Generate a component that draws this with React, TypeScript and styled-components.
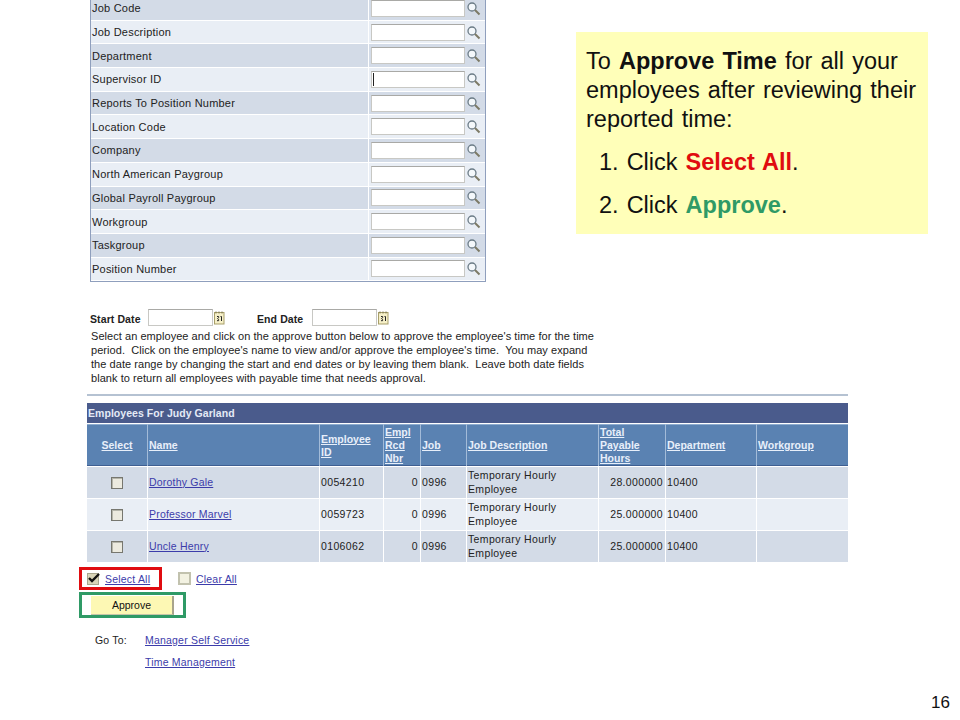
import React from "react";
import styled, { createGlobalStyle } from "styled-components";

const searchFields = [
  "Job Code",
  "Job Description",
  "Department",
  "Supervisor ID",
  "Reports To Position Number",
  "Location Code",
  "Company",
  "North American Paygroup",
  "Global Payroll Paygroup",
  "Workgroup",
  "Taskgroup",
  "Position Number",
];

const employees = [
  { name: "Dorothy Gale", id: "0054210", hours: "28.000000" },
  { name: "Professor Marvel", id: "0059723", hours: "25.000000" },
  { name: "Uncle Henry", id: "0106062", hours: "25.000000" },
];

const GlobalStyle = createGlobalStyle`
  html, body {
    margin: 0;
    padding: 0;
    background: #fff;
  }
  body {
    font-family: "Liberation Sans", Arial, sans-serif;
    color: #222;
  }
`;

const Page = styled.div`
  width: 960px;
  height: 720px;
  overflow: hidden;
  display: flex;
  flex-direction: column;
`;

const TopSection = styled.div`
  display: flex;
  align-items: flex-start;
  margin-top: -3px;
  padding-left: 90px;
`;

const SearchPanel = styled.div`
  width: 396px;
  box-sizing: border-box;
  border: 1px solid #8f9fbd;
  border-top: none;
  height: 285px;
  background: #fff;
`;

const SearchRow = styled.div<{ $shaded: boolean }>`
  display: grid;
  grid-template-columns: 277px 1fr;
  height: 23.7px;
  background: ${(p) => (p.$shaded ? "#d3dbe7" : "#e9eef5")};
  border-bottom: 1px solid #fff;
  box-sizing: border-box;
`;

const SearchLabel = styled.div`
  display: flex;
  align-items: center;
  padding-left: 1px;
  font-size: 11px;
  letter-spacing: 0.22px;
`;

const SearchCell = styled.div`
  display: flex;
  align-items: center;
  gap: 1px;
  padding-left: 2px;
  border-left: 1px solid #fff;
`;

const TextBox = styled.div<{ $width: number }>`
  width: ${(p) => p.$width}px;
  height: 17px;
  box-sizing: border-box;
  background: #fff;
  border: 1px solid #c8c8c4;
  border-top-color: #a9a9a6;
  display: flex;
  align-items: center;
  padding-left: 1px;
`;

const Caret = styled.span`
  width: 1px;
  height: 13px;
  background: #222;
`;

const Callout = styled.div`
  margin: 35px 0 0 90px;
  width: 352px;
  height: 202px;
  box-sizing: border-box;
  background: #ffffb9;
  padding: 15px 0 0 10px;
  font-size: 23.5px;
  line-height: 29px;
  color: #111;
`;

const CalloutText = styled.p`
  margin: 0 0 14px;
  word-spacing: 1.6px;
`;

const CalloutStep = styled.p`
  margin: 0 0 14px 13px;
  word-spacing: 1.5px;
`;

const Accent = styled.b<{ $color: string }>`
  color: ${(p) => p.$color};
`;

const DateRow = styled.div`
  display: flex;
  align-items: center;
  height: 17px;
  margin: 27px 0 0 90px;
`;

const DateLabel = styled.b<{ $width: number }>`
  width: ${(p) => p.$width}px;
  font-size: 10.5px;
  letter-spacing: 0.1px;
  padding-top: 3px;
`;

const CalendarSlot = styled.div<{ $width: number }>`
  width: ${(p) => p.$width}px;
  padding-left: 1px;
  display: flex;
`;

const Instructions = styled.p`
  margin: 3px 0 0 91px;
  width: 520px;
  font-size: 11px;
  letter-spacing: 0.05px;
  line-height: 14px;
  white-space: pre-wrap;
`;

const Rule = styled.div`
  margin: 9px 0 0 87px;
  width: 761px;
  height: 2px;
  background: #b5c2d2;
`;

const EmployeeGrid = styled.div`
  margin: 7px 0 0 87px;
  width: 761px;
`;

const GridTitle = styled.div`
  height: 20px;
  background: #4a5b8c;
  color: #e4eaf6;
  font-size: 10.5px;
  letter-spacing: 0.05px;
  font-weight: bold;
  display: flex;
  align-items: center;
  padding-left: 1px;
`;

const Row = styled.div`
  display: grid;
  grid-template-columns: 60px 171px 63px 36px 45px 131px 66px 90px 1fr;
  column-gap: 1px;
  margin-top: 1px;
`;

const HeadRow = styled(Row)`
  background: #a3bbd8;
`;

const HeadCell = styled.a<{ $center?: boolean }>`
  height: 42px;
  box-sizing: border-box;
  background: #5a82b2;
  border-top: 1px solid #8eaccf;
  border-bottom: 1px solid #3f5f92;
  color: #e8effa;
  font-size: 10.5px;
  font-weight: bold;
  line-height: 13px;
  text-decoration: underline;
  padding: 1px 0 0 ${(p) => (p.$center ? 0 : 1)}px;
  display: flex;
  align-items: center;
  justify-content: ${(p) => (p.$center ? "center" : "flex-start")};
  white-space: pre-line;
`;

const DataRow = styled(Row)`
  height: 31px;
`;

const DataCell = styled.div<{ $shaded: boolean; $align?: string }>`
  background: ${(p) => (p.$shaded ? "#d3dbe7" : "#e9eef5")};
  font-size: 10.5px;
  line-height: 13.5px;
  letter-spacing: 0.35px;
  padding: 0 2px 0 1px;
  display: flex;
  align-items: center;
  justify-content: ${(p) => p.$align ?? "flex-start"};
`;

const PeopleLink = styled.a`
  color: #3c3caa;
  text-decoration: underline;
  font-size: 10.5px;
  letter-spacing: 0.2px;
`;

const CheckBox = styled.span<{ $size?: number }>`
  position: relative;
  display: inline-block;
  width: ${(p) => p.$size ?? 12}px;
  height: ${(p) => p.$size ?? 12}px;
  box-sizing: border-box;
  background: #eceadf;
  border: 1px solid #77776f;
  box-shadow: inset 1px 1px 0 #b5b5aa;
`;

const TickedBox = styled(CheckBox)`
  background: #d8d4b8;
  border-color: #a8a68e;
  box-shadow: none;
`;

const ClearBox = styled(CheckBox)`
  background: #f3f2e2;
  border: 2px solid #c2c2ae;
  box-shadow: none;
`;

const ActionRow = styled.div`
  display: flex;
  align-items: center;
  margin: 5px 0 0 79px;
`;

const RedFrame = styled.div`
  width: 83px;
  height: 23px;
  box-sizing: border-box;
  border: 3px solid #e00c10;
  display: flex;
  align-items: center;
  gap: 6px;
  padding-left: 5px;
`;

const ClearGroup = styled.div`
  display: flex;
  align-items: center;
  gap: 5px;
  margin-left: 16px;
`;

const GreenFrame = styled.div`
  margin: 2px 0 0 79px;
  width: 107px;
  height: 26px;
  box-sizing: border-box;
  border: 3px solid #2f9a66;
  display: flex;
  align-items: center;
  padding-left: 9px;
`;

const ApproveButton = styled.div`
  width: 81px;
  height: 18px;
  background: #fdf8b4;
  border-right: 2px solid #a8a48c;
  border-bottom: 1px solid #c8c4a8;
  font-size: 10.5px;
  color: #111;
  display: flex;
  align-items: center;
  justify-content: center;
`;

const GoTo = styled.div`
  display: grid;
  grid-template-columns: 50px auto;
  justify-content: start;
  margin: 15px 0 0 95px;
  font-size: 10.5px;
  letter-spacing: 0.2px;
  line-height: 14px;
`;

const GoToLinks = styled.div`
  display: flex;
  flex-direction: column;
  row-gap: 8px;
`;

const PageNumber = styled.div`
  align-self: flex-end;
  margin: 24px 10px 0 0;
  font-size: 17px;
  line-height: 20px;
  color: #111;
`;

const SearchIcon = () => (
  <svg width="15" height="15" viewBox="0 0 15 15" fill="none">
    <circle cx="6" cy="6" r="4" fill="#f4f8fb" stroke="#6b7b86" strokeWidth="1.3" />
    <path d="M9 9l4.5 4.5" stroke="#7d7a66" strokeWidth="2" />
  </svg>
);

const CalendarIcon = () => (
  <svg width="11" height="14" viewBox="0 0 11 14">
    <rect x="0.5" y="1.5" width="9.5" height="11.5" fill="#f6f0c8" stroke="#a89f6a" />
    <path d="M2 0.5v2M5 0.5v2M8 0.5v2" stroke="#7a7550" />
    <path d="M3 5.5h1.6v1.2l-1 1 1 .8v1.2H3M6.5 5.5h1v4.5" fill="none" stroke="#222" strokeWidth="1" />
  </svg>
);

const CheckMark = () => (
  <svg width="14" height="12" viewBox="0 0 14 12" style={{ position: "absolute", left: -1, top: -2 }}>
    <path d="M2 6l3 3 7-7" fill="none" stroke="#111" strokeWidth="2.4" />
  </svg>
);

export default function App() {
  return (
    <Page>
      <GlobalStyle />
      <TopSection>
        <SearchPanel>
          {searchFields.map((field, i) => (
            <SearchRow key={field} $shaded={i % 2 === 0}>
              <SearchLabel>{field}</SearchLabel>
              <SearchCell>
                <TextBox $width={94}>{field === "Supervisor ID" && <Caret />}</TextBox>
                <SearchIcon />
              </SearchCell>
            </SearchRow>
          ))}
        </SearchPanel>
        <Callout>
          <CalloutText>
            To <b>Approve Time</b> for all your employees after reviewing their reported time:
          </CalloutText>
          <CalloutStep>
            1. Click <Accent $color="#e00c10">Select All</Accent>.
          </CalloutStep>
          <CalloutStep>
            2. Click <Accent $color="#2f9a66">Approve</Accent>.
          </CalloutStep>
        </Callout>
      </TopSection>

      <DateRow>
        <DateLabel $width={58}>Start Date</DateLabel>
        <TextBox $width={65} />
        <CalendarSlot $width={43}>
          <CalendarIcon />
        </CalendarSlot>
        <DateLabel $width={55}>End Date</DateLabel>
        <TextBox $width={65} />
        <CalendarSlot $width={12}>
          <CalendarIcon />
        </CalendarSlot>
      </DateRow>

      <Instructions>
        {`Select an employee and click on the approve button below to approve the employee's time for the time
period.  Click on the employee's name to view and/or approve the employee's time.  You may expand
the date range by changing the start and end dates or by leaving them blank.  Leave both date fields
blank to return all employees with payable time that needs approval.`}
      </Instructions>

      <Rule />

      <EmployeeGrid>
        <GridTitle>Employees For Judy Garland</GridTitle>
        <HeadRow>
          <HeadCell $center>Select</HeadCell>
          <HeadCell>Name</HeadCell>
          <HeadCell>{"Employee\nID"}</HeadCell>
          <HeadCell>{"Empl\nRcd\nNbr"}</HeadCell>
          <HeadCell>Job</HeadCell>
          <HeadCell>Job Description</HeadCell>
          <HeadCell>{"Total\nPayable\nHours"}</HeadCell>
          <HeadCell>Department</HeadCell>
          <HeadCell>Workgroup</HeadCell>
        </HeadRow>
        {employees.map((emp, i) => {
          const shaded = i % 2 === 0;
          return (
            <DataRow key={emp.id}>
              <DataCell $shaded={shaded} $align="center">
                <CheckBox />
              </DataCell>
              <DataCell $shaded={shaded}>
                <PeopleLink>{emp.name}</PeopleLink>
              </DataCell>
              <DataCell $shaded={shaded}>{emp.id}</DataCell>
              <DataCell $shaded={shaded} $align="flex-end">0</DataCell>
              <DataCell $shaded={shaded}>0996</DataCell>
              <DataCell $shaded={shaded}>Temporary Hourly Employee</DataCell>
              <DataCell $shaded={shaded} $align="flex-end">{emp.hours}</DataCell>
              <DataCell $shaded={shaded}>10400</DataCell>
              <DataCell $shaded={shaded} />
            </DataRow>
          );
        })}
      </EmployeeGrid>

      <ActionRow>
        <RedFrame>
          <TickedBox>
            <CheckMark />
          </TickedBox>
          <PeopleLink>Select All</PeopleLink>
        </RedFrame>
        <ClearGroup>
          <ClearBox $size={13} />
          <PeopleLink>Clear All</PeopleLink>
        </ClearGroup>
      </ActionRow>

      <GreenFrame>
        <ApproveButton>Approve</ApproveButton>
      </GreenFrame>

      <GoTo>
        <span>Go To:</span>
        <GoToLinks>
          <PeopleLink>Manager Self Service</PeopleLink>
          <PeopleLink>Time Management</PeopleLink>
        </GoToLinks>
      </GoTo>

      <PageNumber>16</PageNumber>
    </Page>
  );
}
